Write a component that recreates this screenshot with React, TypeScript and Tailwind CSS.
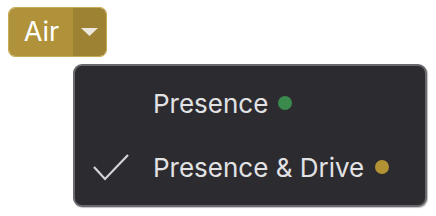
import React from "react";

export default function App() {
  return (
    <div className="w-[436px] h-[216px] bg-white relative" style={{ fontFamily: "Inter, 'Noto Sans', sans-serif" }}>
      <div className="absolute left-[8px] top-[7px] flex h-[50px] w-[99px] rounded-[7px] border border-[#c8ab55] overflow-hidden">
        <div className="flex w-[64px] items-center justify-center bg-[#b0923a] text-[27px] text-white pl-[1px]">Air</div>
        <div className="flex flex-1 items-center justify-center bg-[#9d8233]">
          <svg width="17" height="8" viewBox="0 0 17 8">
            <polygon points="0,0 17,0 8.5,8" fill="#ece8de" />
          </svg>
        </div>
      </div>
      <div className="absolute left-[73px] top-[64px] w-[354px] h-[143px] rounded-[9px] border-2 border-[#68686d] bg-[#2c2b30] pt-[5px] shadow-[1px_1px_1px_rgba(0,0,0,0.25)]">
        <div className="flex h-[64px] items-center">
          <div className="w-[78px]" />
          <span className="text-[26px] text-[#e2e2e4]">Presence</span>
          <span className="ml-[10px] h-[14px] w-[14px] rounded-full bg-[#3a8a4e]" />
        </div>
        <div className="flex h-[64px] items-center">
          <div className="flex w-[78px] justify-start pl-[18px]">
            <svg width="36" height="27" viewBox="0 0 36 27">
              <polyline points="1,13 12,25 35,1" fill="none" stroke="#d4d4d6" strokeWidth="2.2" />
            </svg>
          </div>
          <span className="text-[26px] text-[#e2e2e4]">Presence &amp; Drive</span>
          <span className="ml-[11px] h-[14px] w-[14px] rounded-full bg-[#b39233]" />
        </div>
      </div>
    </div>
  );
}
